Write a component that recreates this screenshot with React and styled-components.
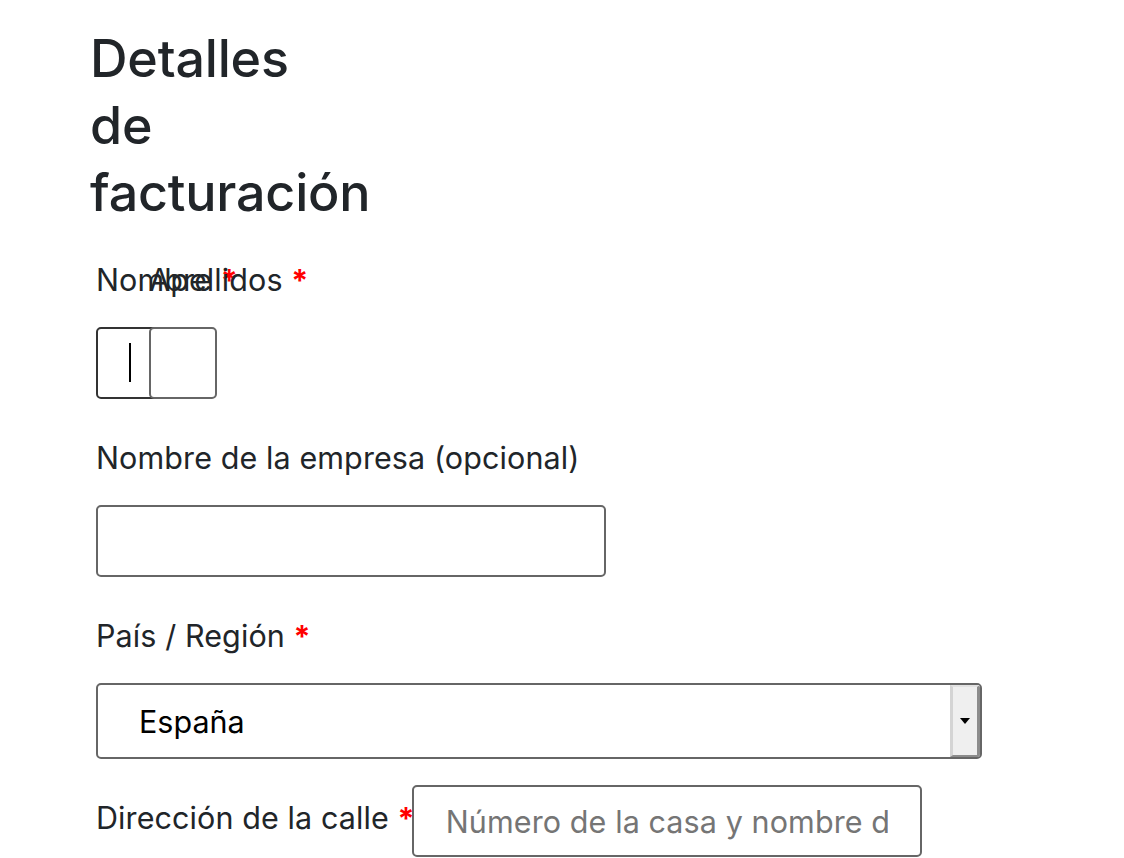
import React from 'react';
import styled, { createGlobalStyle } from 'styled-components';

const GlobalStyle = createGlobalStyle`
  html, body {
    margin: 0;
    padding: 0;
    background: #fff;
  }
  body {
    font-family: Inter, "Noto Sans", "Liberation Sans", sans-serif;
    color: #212529;
  }
`;

const BillingForm = () => {
  return (
    <Page>
      <GlobalStyle />
      <Heading>Detalles de facturación</Heading>

      <Row>
        <NarrowField>
          <Label>
            Nombre <Required>*</Required>
          </Label>
          <Input type="text" $focused />
          <Caret />
        </NarrowField>
        <NarrowField>
          <Label>
            Apellidos <Required>*</Required>
          </Label>
          <Input type="text" />
        </NarrowField>
      </Row>

      <Field>
        <Label>Nombre de la empresa (opcional)</Label>
        <Input type="text" $wide />
      </Field>

      <Field $last>
        <Label>
          País / Región <Required>*</Required>
        </Label>
        <SelectBox>
          <SelectValue>España</SelectValue>
          <SelectButton>
            <Arrow />
          </SelectButton>
        </SelectBox>
      </Field>

      <InlineField>
        <InlineLabel>
          Dirección de la calle <Required>*</Required>
        </InlineLabel>
        <Input type="text" $wide placeholder="Número de la casa y nombre de la calle" />
      </InlineField>
    </Page>
  );
};

const Page = styled.div`
  padding: 25px 0 0 87px;
`;

const Heading = styled.h3`
  width: 250px;
  margin: 0 0 33px 3px;
  font-size: 52px;
  line-height: 67px;
  font-weight: 500;
  letter-spacing: -0.2px;
  color: #212529;
`;

const Row = styled.div`
  display: flex;
  padding-left: 9px;
  margin-bottom: 38px;
`;

const NarrowField = styled.div`
  position: relative;
  width: 53px;
  flex: none;
  white-space: nowrap;
`;

const Field = styled.div`
  padding-left: 9px;
  margin-bottom: ${(p) => (p.$last ? '26px' : '38px')};
`;

const Label = styled.label`
  display: block;
  font-size: 30.5px;
  line-height: 42px;
  letter-spacing: 0.1px;
  margin-bottom: 26px;
  color: #212529;
`;

const Required = styled.span`
  color: #ff0000;
  font-weight: 700;
`;

const Input = styled.input`
  display: block;
  box-sizing: border-box;
  width: ${(p) => (p.$wide ? '510px' : '68px')};
  height: 72px;
  margin: 0;
  padding: 0 32px;
  border: 2px solid ${(p) => (p.$focused ? '#333' : '#666')};
  border-radius: 5px;
  background: #fff;
  font-family: Inter, "Noto Sans", "Liberation Sans", sans-serif;
  font-size: 30.5px;
  letter-spacing: 0.1px;
  color: #000;
  outline: none;
  caret-color: transparent;

  &::placeholder {
    color: #757575;
    opacity: 1;
  }
`;

const Caret = styled.span`
  position: absolute;
  left: 33px;
  bottom: 17px;
  width: 2px;
  height: 39px;
  background: #000;
`;

const SelectBox = styled.div`
  box-sizing: border-box;
  display: flex;
  align-items: stretch;
  width: 886px;
  height: 76px;
  border: 2px solid #666;
  border-radius: 5px;
  background: #fff;
  overflow: hidden;
`;

const SelectValue = styled.div`
  flex: 1;
  display: flex;
  align-items: center;
  padding-left: 41px;
  font-size: 30.5px;
  color: #000;
`;

const SelectButton = styled.div`
  box-sizing: border-box;
  width: 30px;
  display: flex;
  align-items: center;
  justify-content: center;
  background: #efefef;
  border-left: 3px solid #d4d4d4;
  border-top: 2px solid #e2e2e2;
  border-right: 3px solid #8c8c8c;
  border-bottom: 2px solid #8c8c8c;
`;

const Arrow = styled.span`
  width: 0;
  height: 0;
  border-left: 5px solid transparent;
  border-right: 5px solid transparent;
  border-top: 6px solid #000;
`;

const InlineField = styled.div`
  display: flex;
  align-items: flex-start;
  padding-left: 9px;
`;

const InlineLabel = styled.label`
  font-size: 30.5px;
  line-height: 42px;
  letter-spacing: 0.1px;
  margin-top: 12px;
  margin-right: -3px;
  white-space: nowrap;
  color: #212529;
`;

export default BillingForm;
